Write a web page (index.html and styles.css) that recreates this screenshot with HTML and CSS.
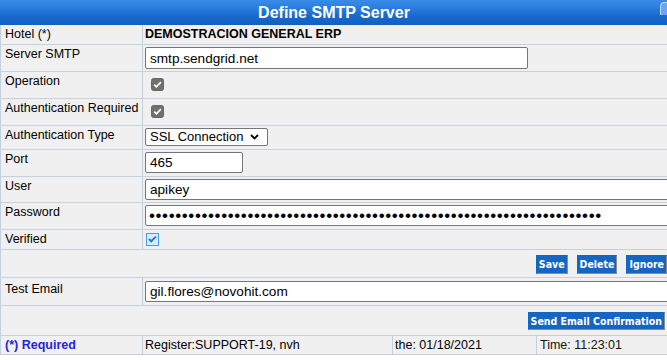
FILE: index.html
```html
<!DOCTYPE html>
<html lang="en">
<head>
<meta charset="utf-8">
<title>Define SMTP Server</title>
<link rel="stylesheet" href="styles.css">
</head>
<body>
<div class="panel">
  <div class="title">Define SMTP Server
    <svg class="corner" width="8" height="13" viewBox="0 0 8 13"><path d="M0 13 V4 Q0 0 4 0 H8 V13 Z" fill="#6aa6ee"/><path d="M0.5 13 V4 Q0.5 0.5 4 0.5 H8" fill="none" stroke="#bcd8f8"/></svg>
  </div>

  <div class="row h20">
    <div class="lbl">Hotel (*)</div>
    <div class="val"><b class="hotel">DEMOSTRACION GENERAL ERP</b></div>
  </div>

  <div class="row h27">
    <div class="lbl">Server SMTP</div>
    <div class="val"><input class="inp w-smtp tall" type="text" value="smtp.sendgrid.net"></div>
  </div>

  <div class="row h27">
    <div class="lbl">Operation</div>
    <div class="val">
      <svg class="cb" width="13" height="13" viewBox="0 0 13 13"><rect x="0.5" y="0.5" width="12" height="12" rx="2" fill="#707070" stroke="#666"/><path d="M3.2 6.6 L5.4 8.8 L9.9 4.1" fill="none" stroke="#fff" stroke-width="1.8"/></svg>
    </div>
  </div>

  <div class="row h27">
    <div class="lbl">Authentication Required</div>
    <div class="val">
      <svg class="cb" width="13" height="13" viewBox="0 0 13 13"><rect x="0.5" y="0.5" width="12" height="12" rx="2" fill="#707070" stroke="#666"/><path d="M3.2 6.6 L5.4 8.8 L9.9 4.1" fill="none" stroke="#fff" stroke-width="1.8"/></svg>
    </div>
  </div>

  <div class="row h24">
    <div class="lbl">Authentication Type</div>
    <div class="val">
      <select class="sel"><option>SSL Connection</option><option>TLS Connection</option><option>None</option></select>
    </div>
  </div>

  <div class="row h27">
    <div class="lbl">Port</div>
    <div class="val"><input class="inp w-port" type="text" value="465"></div>
  </div>

  <div class="row h26">
    <div class="lbl">User</div>
    <div class="val"><input class="inp w-long" type="text" value="apikey"></div>
  </div>

  <div class="row h27">
    <div class="lbl">Password</div>
    <div class="val"><input class="inp w-long pwd" type="password" value="SG.aBcDeFgHiJkLmNoPqRsTuV.wXyZ0123456789aBcDeFgHiJkLmNoPqRsTuVwXyZ012"></div>
  </div>

  <div class="row h20">
    <div class="lbl">Verified</div>
    <div class="val">
      <svg class="cbv" width="13" height="13" viewBox="0 0 13 13"><rect x="0.5" y="0.5" width="12" height="12" fill="#e3f1ff" stroke="#3f9cf0"/><rect x="1.5" y="1.5" width="10" height="10" fill="#d6eafd"/><path d="M3 5.8 L5.2 8.3 L10 3.6" fill="none" stroke="#1f78dc" stroke-width="2"/></svg>
    </div>
  </div>

  <div class="row full h28">
    <div class="actions">
      <button class="btn" type="button">Save</button>
      <button class="btn" type="button">Delete</button>
      <button class="btn" type="button">Ignore</button>
    </div>
  </div>

  <div class="row h28">
    <div class="lbl lbl-low">Test Email</div>
    <div class="val val-low"><input class="inp w-long" type="text" value="gil.flores@novohit.com"></div>
  </div>

  <div class="row full h30">
    <div class="actions send">
      <button class="btn" type="button">Send Email Confirmation</button>
    </div>
  </div>

  <div class="row foot h19">
    <div class="lbl req">(*) Required</div>
    <div class="fcell">Register:SUPPORT-19, nvh</div>
    <div class="fcell">the: 01/18/2021</div>
    <div class="fcell last">Time: 11:23:01</div>
  </div>
</div>
</body>
</html>
```
FILE: styles.css
```css
* { box-sizing: border-box; }

html, body {
  margin: 0;
  padding: 0;
  background: #ffffff;
  overflow: hidden;
}

body {
  font-family: "Liberation Sans", Arial, sans-serif;
  font-size: 12.5px;
  color: #000;
}

.panel {
  width: 668px;
}

.title {
  position: relative;
  height: 25px;
  line-height: 25px;
  text-align: center;
  color: #fff;
  font-weight: bold;
  font-size: 16px;
  background: linear-gradient(#3a8ce8 0%, #2a7ee0 30%, #1868cc 65%, #125fc2 100%);
}

.corner {
  position: absolute;
  right: 0;
  top: 2px;
}

.row {
  display: grid;
  grid-template-columns: 142px 1fr;
  background: #f0f0f0;
  border-left: 1px solid #c3d0e0;
  border-bottom: 1px solid #c3d0e0;
}

.h19 { height: 19px; }
.h20 { height: 20px; }
.h24 { height: 24px; }
.h26 { height: 26px; }
.h27 { height: 27px; }
.h28 { height: 28px; }
.h30 { height: 30px; }

.lbl {
  border-right: 1px solid #c3d0e0;
  padding: 1px 4px 0 4px;
  line-height: 16px;
  white-space: nowrap;
}

.lbl-low { padding-top: 3px; }

.val {
  padding: 2px 2px 0 2px;
  line-height: 16px;
  display: flex;
  align-items: flex-start;
  min-width: 0;
  overflow: hidden;
}

.val-low { padding-top: 3px; }

.hotel {
  margin-top: -1px;
  font-weight: bold;
}

.inp {
  height: 21px;
  border: 1px solid #767676;
  border-radius: 2px;
  padding: 0 4px;
  background: #fff;
  color: #000;
  font-family: "Liberation Sans", Arial, sans-serif;
  font-size: 13.6px;
  outline: none;
  flex: none;
}

.tall { height: 22px; }
.w-smtp { width: 383px; }
.w-port { width: 98px; }
.w-long { width: 560px; }

.pwd {
  font-size: 17px;
  letter-spacing: 0.61px;
  padding-left: 3px;
}

.cb {
  display: block;
  margin: 4px 0 0 6px;
}

.cbv {
  display: block;
  margin: 1px 0 0 1px;
}

.sel {
  -webkit-appearance: none;
  appearance: none;
  width: 123px;
  height: 18px;
  border: 1px solid #767676;
  border-radius: 2px;
  padding: 0 0 0 4px;
  background: #fff url("data:image/svg+xml;utf8,<svg xmlns='http://www.w3.org/2000/svg' width='9' height='6' viewBox='0 0 9 6'><path d='M1 1 L4.5 4.5 L8 1' fill='none' stroke='black' stroke-width='1.8'/></svg>") no-repeat right 8px center;
  font-family: "Liberation Sans", Arial, sans-serif;
  font-size: 13px;
  line-height: 16px;
  color: #000;
  outline: none;
}

.full {
  grid-template-columns: 1fr;
}

.actions {
  display: flex;
  justify-content: flex-end;
  align-items: flex-start;
  gap: 9px;
  padding: 5px 1px 0 0;
}

.actions.send {
  padding: 6px 3px 0 0;
}

.btn {
  height: 19px;
  margin: 0;
  padding: 0 2px;
  border: 1px solid;
  border-color: #1566c2 #8c8c8c #8c8c8c #1566c2;
  border-radius: 0;
  background: #1566c2;
  color: #fff;
  font-family: "DejaVu Sans Condensed", "DejaVu Sans", sans-serif;
  font-stretch: condensed;
  font-weight: bold;
  font-size: 10.5px;
  line-height: 17px;
  cursor: pointer;
}

.send .btn {
  height: 18px;
  line-height: 16px;
}

.foot {
  grid-template-columns: 142px 250px 144px 1fr;
}

.req {
  color: #2424dc;
  font-weight: bold;
}

.fcell {
  border-right: 1px solid #c3d0e0;
  padding: 1px 2px 0 2px;
  line-height: 16px;
  white-space: nowrap;
}

.fcell.last {
  border-right: none;
  padding-left: 3px;
  color: #1a1208;
}
```
